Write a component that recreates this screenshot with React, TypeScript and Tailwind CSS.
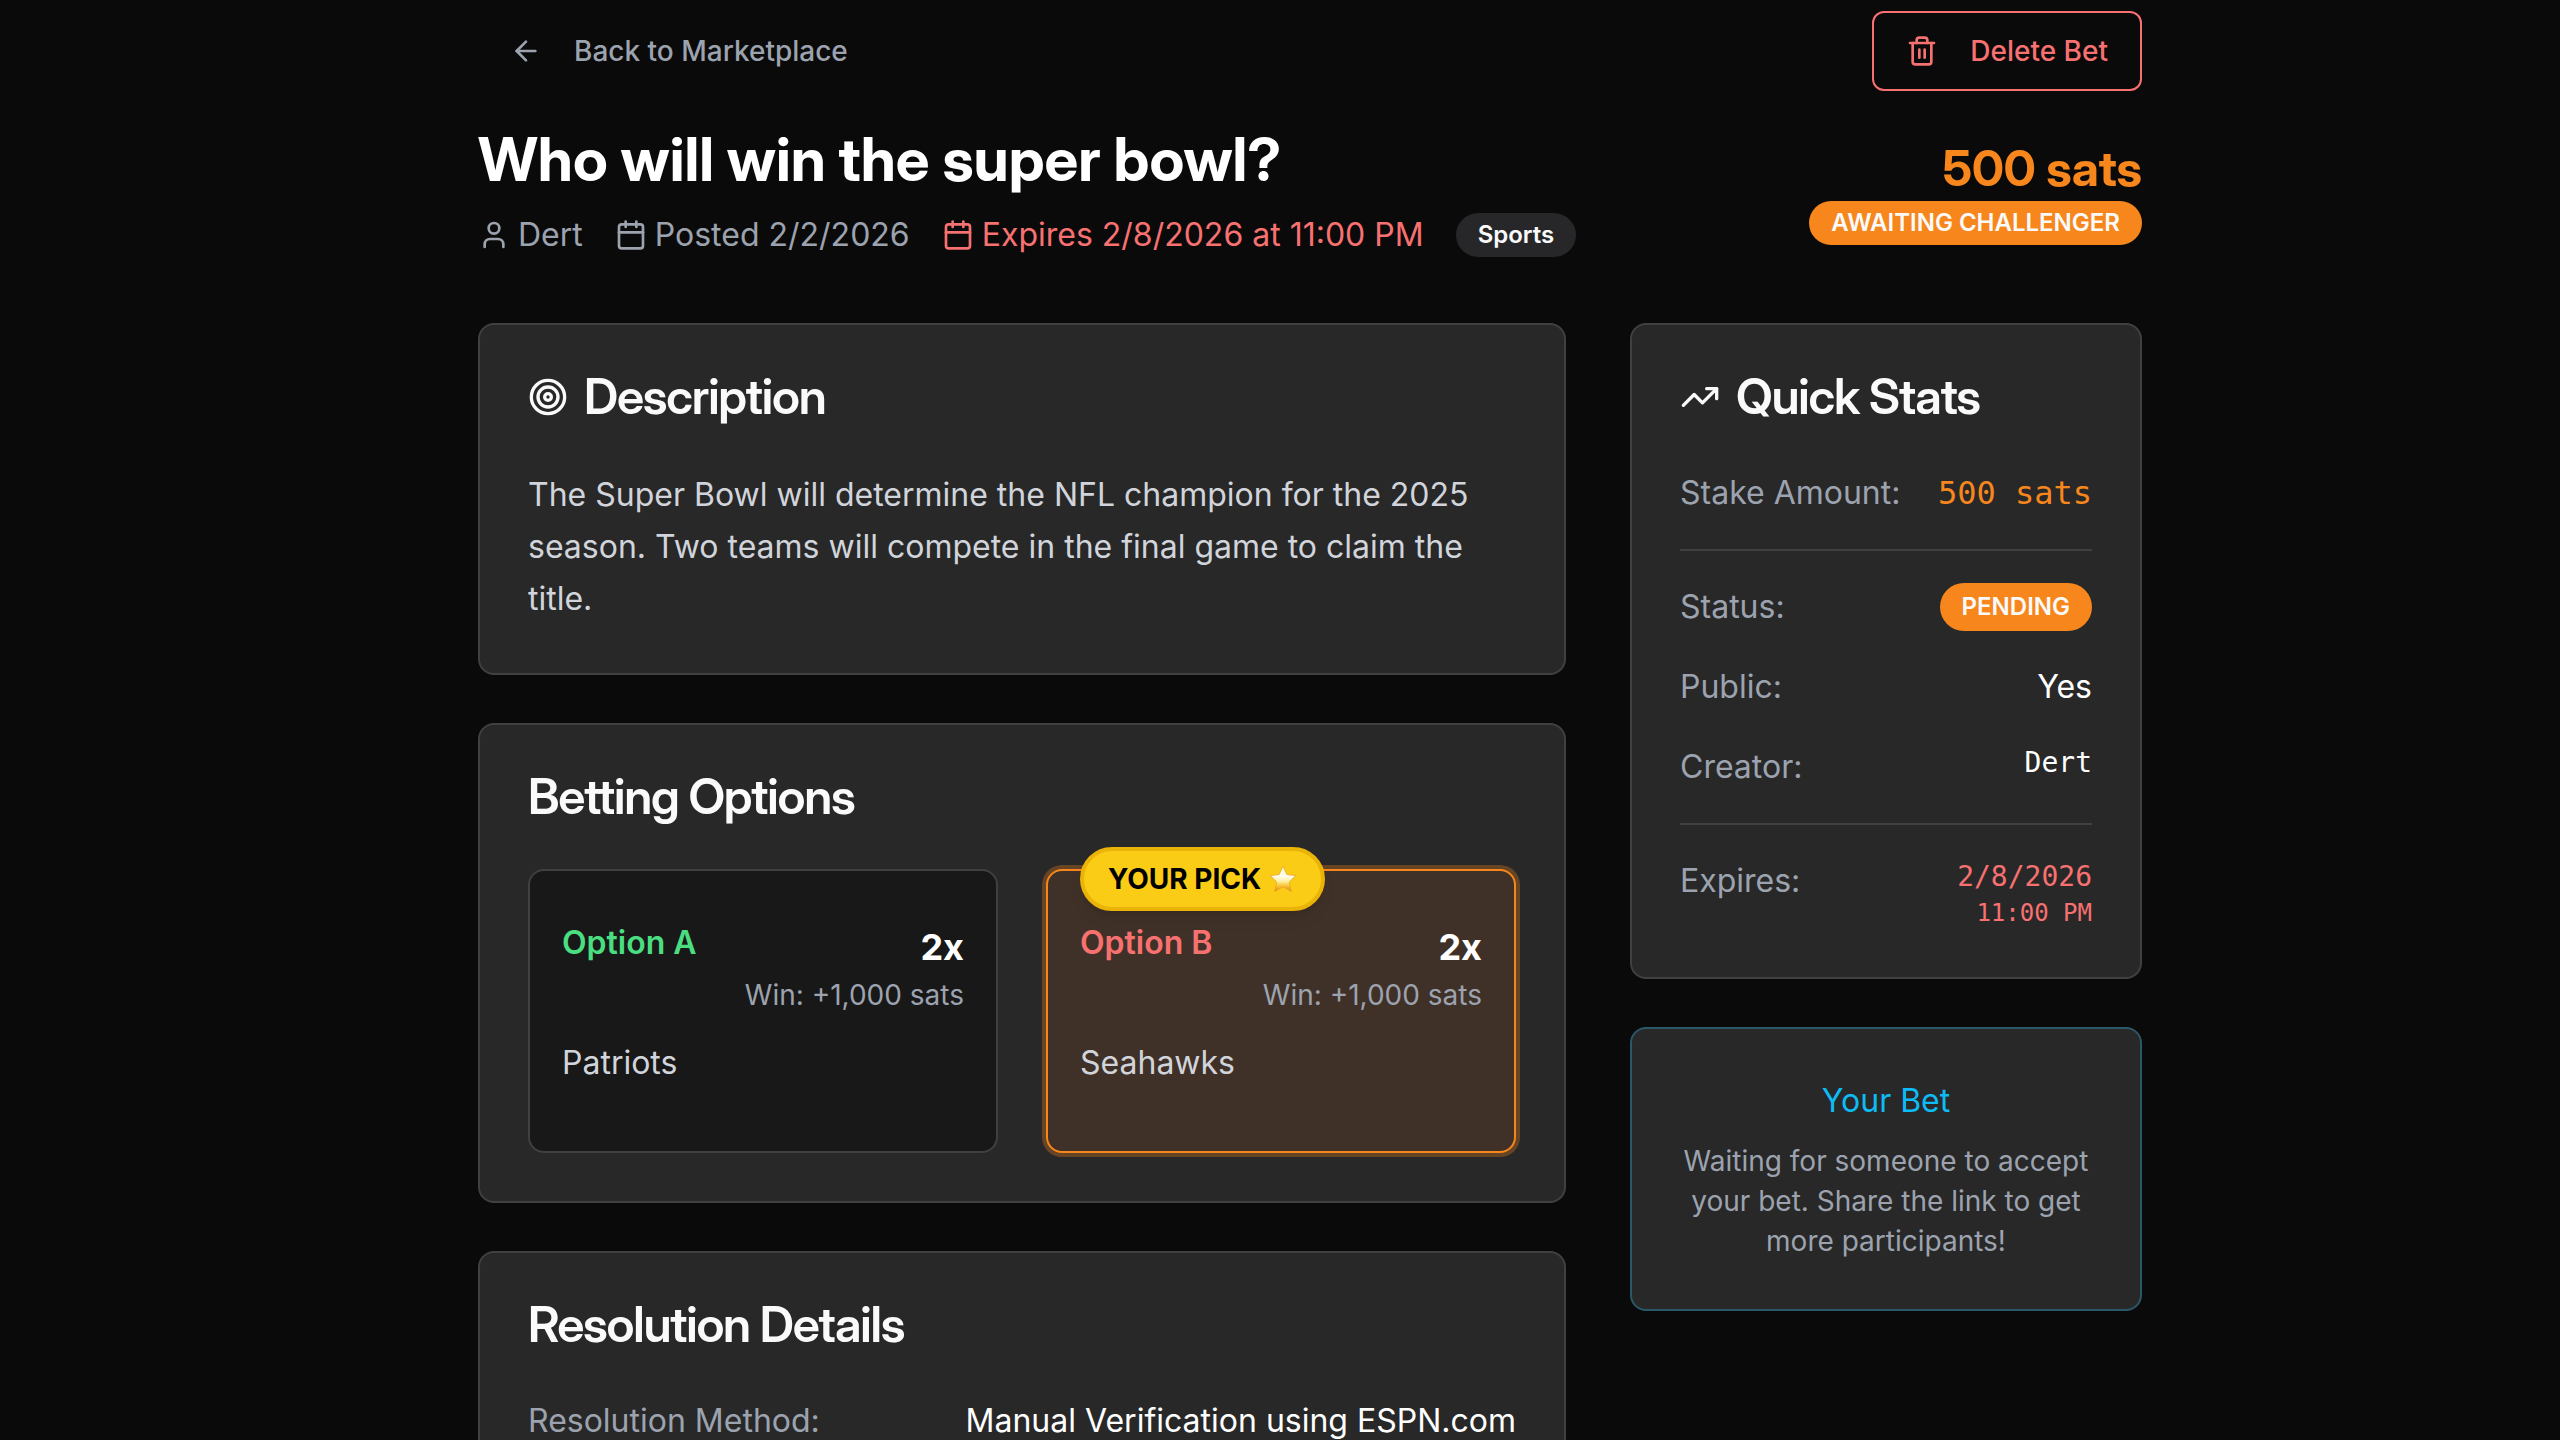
import type { ReactNode } from "react";
import { ArrowLeft, Calendar, Target, Trash2, TrendingUp, User } from "lucide-react";

type Option = {
  name: string;
  team: string;
  nameColor: string;
  picked?: boolean;
};

const options: Option[] = [
  { name: "Option A", team: "Patriots", nameColor: "text-[#4ade80]" },
  { name: "Option B", team: "Seahawks", nameColor: "text-[#f87171]", picked: true },
];

function StarIcon() {
  return (
    <svg viewBox="0 0 28 28" className="size-7" aria-hidden="true">
      <defs>
        <linearGradient id="starBody" x1="0" y1="0" x2="0" y2="1">
          <stop offset="0" stopColor="#fff6b8" />
          <stop offset="0.4" stopColor="#fffdf0" />
          <stop offset="0.6" stopColor="#fff0a0" />
          <stop offset="0.8" stopColor="#f7bf2c" />
          <stop offset="1" stopColor="#d88a18" />
        </linearGradient>
      </defs>
      <path
        d="M14 1 L17.9 9.6 L26.8 10.6 L20.3 17 L22.4 26.4 L14 21.9 L5.6 26.4 L7.7 17 L1.2 10.6 L10.1 9.6 Z"
        fill="url(#starBody)"
        stroke="#e8a524"
        strokeWidth="0.8"
        strokeLinejoin="round"
      />
    </svg>
  );
}

function Card({ title, icon, children }: { title: string; icon?: ReactNode; children: ReactNode }) {
  return (
    <section className="rounded-2xl border-2 border-[#404040] bg-[#282828]">
      <h2 className="flex items-center gap-4 p-12 font-['Inter_Display','Inter',sans-serif] text-[49px] leading-12 font-semibold tracking-tight text-[#fafafa]">
        {icon}
        {title}
      </h2>
      <div className="px-12 pb-12">{children}</div>
    </section>
  );
}

function Badge({ className, children }: { className: string; children: ReactNode }) {
  return (
    <span
      className={`inline-flex items-center rounded-full border-2 border-transparent bg-origin-border px-5 py-1 text-2xl font-semibold text-[#fafafa] ${className}`}
    >
      {children}
    </span>
  );
}

function OptionCard({ option }: { option: Option }) {
  return (
    <div
      className={`relative rounded-2xl border-2 px-8 pt-12 pb-16 ${
        option.picked
          ? "border-[#f7871d] bg-[#403128] ring-4 ring-[#f7871d]/30"
          : "border-[#404040] bg-[#181818]"
      }`}
    >
      {option.picked && (
        <span className="absolute -top-6 left-8 flex items-center gap-2 rounded-full border-4 border-[#eab308] bg-[#facc15] px-6 py-2 text-[28px] leading-10 font-bold whitespace-nowrap text-black shadow-lg">
          YOUR PICK
          <StarIcon />
        </span>
      )}
      <div className="mb-6 flex items-start justify-between">
        <h3 className={`font-semibold ${option.nameColor}`}>{option.name}</h3>
        <div className="text-right">
          <div className="text-[36px] leading-14 font-bold text-white">2x</div>
          <div className="text-[28px] leading-10 text-[#9ca3af]">Win: +1,000 sats</div>
        </div>
      </div>
      <p className="text-[#d1d5db]">{option.team}</p>
    </div>
  );
}

function Row({ label, children }: { label: string; children: ReactNode }) {
  return (
    <div className="flex justify-between">
      <dt className="text-[#9ca3af]">{label}</dt>
      <dd className="flex text-white">{children}</dd>
    </div>
  );
}

export default function App() {
  return (
    <div className="h-screen overflow-y-auto bg-[#0a0a0a] pl-15 font-['Inter',sans-serif] text-[32px] leading-12 text-white [scrollbar-width:none]">
      <main className="mx-auto max-w-448 px-16 pt-[11px] pb-16">
        <nav className="mb-8 flex items-center justify-between text-[28px] leading-10 font-medium">
          <a href="#marketplace" className="flex h-20 items-center gap-8 px-8 text-[#9ca3af]">
            <ArrowLeft className="size-8" />
            Back to Marketplace
          </a>
          <button
            type="button"
            className="flex h-20 items-center gap-8 rounded-xl border-2 border-[#f87171] px-8 text-[#f87171]"
          >
            <Trash2 className="size-8" />
            Delete Bet
          </button>
        </nav>

        <header className="mb-16 flex items-center justify-between">
          <div>
            <h1 className="mb-4 font-['Inter_Display','Inter',sans-serif] text-[60px] leading-18 font-bold">
              Who will win the super bowl?
            </h1>
            <div className="flex items-center gap-8 text-[#9ca3af]">
              <span className="flex items-center gap-2">
                <User className="size-8" />
                Dert
              </span>
              <span className="flex items-center gap-2">
                <Calendar className="size-8" />
                Posted 2/2/2026
              </span>
              <span className="flex items-center gap-2 text-[#f87171]">
                <Calendar className="size-8" />
                Expires 2/8/2026 at 11:00 PM
              </span>
              <Badge className="bg-[#27272a]">Sports</Badge>
            </div>
          </div>
          <div className="flex flex-col items-end">
            <div className="font-['Inter_Display','Inter',sans-serif] text-[49px] leading-16 font-bold text-[#f7871d]">
              500 sats
            </div>
            <Badge className="bg-[#f7871d]">AWAITING CHALLENGER</Badge>
          </div>
        </header>

        <div className="grid grid-cols-3 items-start gap-16">
          <div className="col-span-2 flex flex-col gap-12">
            <Card title="Description" icon={<Target className="size-10" />}>
              <p className="leading-13 text-[#d1d5db]">
                The Super Bowl will determine the NFL champion for the 2025 season. Two teams will
                compete in the final game to claim the title.
              </p>
            </Card>

            <Card title="Betting Options">
              <div className="grid grid-cols-2 gap-12">
                {options.map((option) => (
                  <OptionCard key={option.name} option={option} />
                ))}
              </div>
            </Card>

            <Card title="Resolution Details">
              <dl>
                <Row label="Resolution Method:">Manual Verification using ESPN.com</Row>
              </dl>
            </Card>
          </div>

          <aside className="flex flex-col gap-12">
            <Card title="Quick Stats" icon={<TrendingUp className="size-10" />}>
              <dl className="flex flex-col gap-8">
                <Row label="Stake Amount:">
                  <span className="font-['DejaVu_Sans_Mono',monospace] text-[#f7871d]">500 sats</span>
                </Row>
                <div role="separator" className="h-0.5 bg-[#404040]" />
                <Row label="Status:">
                  <Badge className="bg-[#f7871d]">PENDING</Badge>
                </Row>
                <Row label="Public:">Yes</Row>
                <Row label="Creator:">
                  <span className="font-['DejaVu_Sans_Mono',monospace] text-[28px] leading-10">Dert</span>
                </Row>
                <div role="separator" className="h-0.5 bg-[#404040]" />
                <Row label="Expires:">
                  <div className="text-right font-['DejaVu_Sans_Mono',monospace] text-[#f87171]">
                    <div className="text-[28px] leading-10">2/8/2026</div>
                    <div className="text-2xl">11:00 PM</div>
                  </div>
                </Row>
              </dl>
            </Card>

            <section className="rounded-2xl border-2 border-[#2a5866] bg-[#282828] p-12 text-center">
              <h2 className="mb-4 text-[#0dbbf5]">Your Bet</h2>
              <p className="text-[28px] leading-10 text-[#9ca3af]">
                Waiting for someone to accept your bet. Share the link to get more participants!
              </p>
            </section>
          </aside>
        </div>
      </main>
    </div>
  );
}
